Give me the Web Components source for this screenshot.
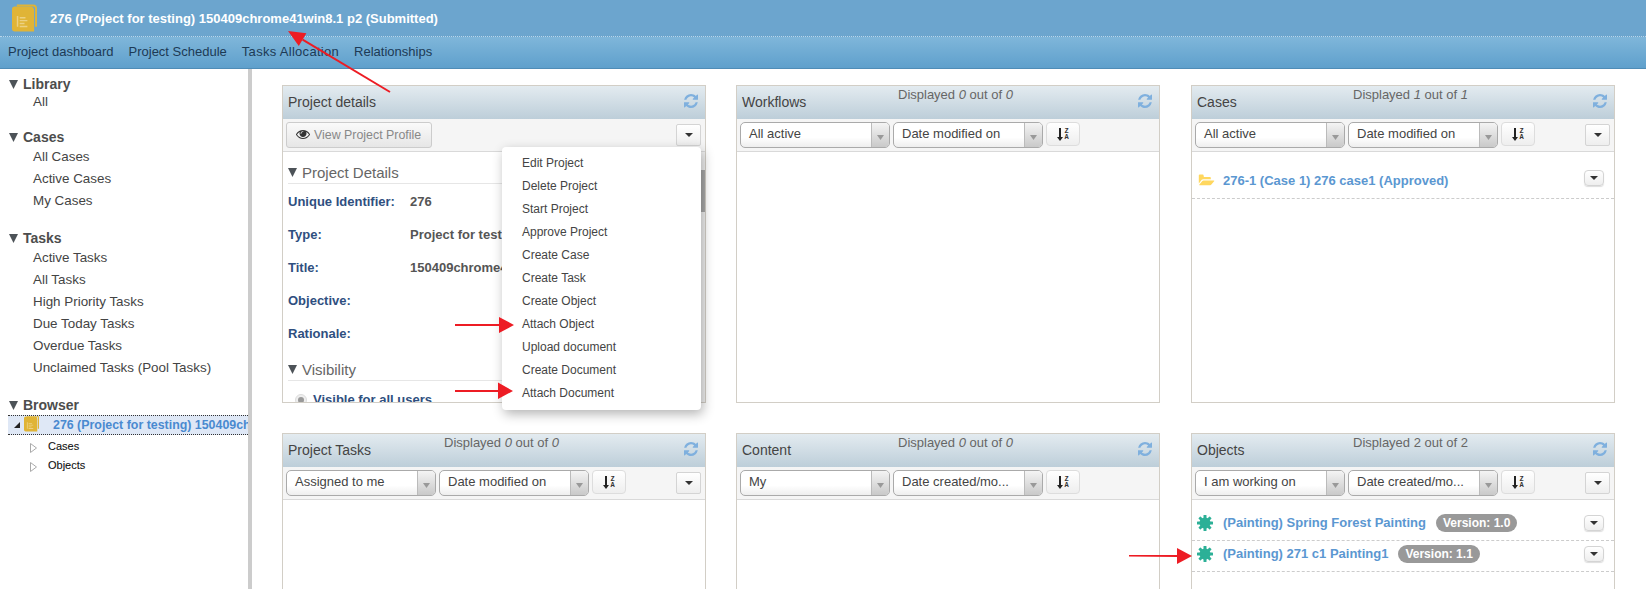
<!DOCTYPE html>
<html>
<head>
<meta charset="utf-8">
<title>Project 276</title>
<style>
    html, body { margin: 0; padding: 0; background: #fff; }
    body { width: 1646px; height: 589px; overflow: hidden; position: relative; font-family: "Liberation Sans", Arial, sans-serif; color: #333; }
    app-shell > [slot="side"] { display: block; }
</style>
</head>
<body>
<app-shell>
    <app-header slot="header" title-text="276 (Project for testing) 150409chrome41win8.1 p2 (Submitted)"></app-header>
    <app-nav slot="nav">
        <span>Project dashboard</span><span>Project Schedule</span><span style="letter-spacing:.3px">Tasks Allocation</span><span>Relationships</span>
    </app-nav>
    <div slot="side">
        <side-group heading="Library" style="margin-bottom:15px;--head-gap:-2px"><side-link>All</side-link></side-group>
        <side-group heading="Cases">
            <side-link>All Cases</side-link><side-link>Active Cases</side-link><side-link>My Cases</side-link>
        </side-group>
        <side-group heading="Tasks">
            <side-link>Active Tasks</side-link><side-link>All Tasks</side-link><side-link>High Priority Tasks</side-link>
            <side-link>Due Today Tasks</side-link><side-link>Overdue Tasks</side-link><side-link>Unclaimed Tasks (Pool Tasks)</side-link>
        </side-group>
        <side-group heading="Browser" style="--head-gap:1px">
            <browser-tree></browser-tree>
        </side-group>
    </div>

    <work-panel slot="main" heading="Project details">
        <view-button slot="tools"></view-button>
        <drop-button slot="tools" style="margin-left:auto"></drop-button>
        <project-details></project-details>
        <action-menu slot="over">
            <span>Edit Project</span><span>Delete Project</span><span>Start Project</span><span>Approve Project</span>
            <span>Create Case</span><span>Create Task</span><span>Create Object</span><span>Attach Object</span>
            <span>Upload document</span><span>Create Document</span><span>Attach Document</span>
        </action-menu>
    </work-panel>

    <work-panel slot="main" heading="Workflows" shown="0" total="0" italic style="margin-right:1px">
        <combo-box slot="tools" label="All active"></combo-box>
        <combo-box slot="tools" label="Date modified on"></combo-box>
        <sort-button slot="tools"></sort-button>
    </work-panel>

    <work-panel slot="main" heading="Cases" shown="1" total="1" italic>
        <combo-box slot="tools" label="All active"></combo-box>
        <combo-box slot="tools" label="Date modified on"></combo-box>
        <sort-button slot="tools"></sort-button>
        <drop-button slot="tools" style="margin-left:auto"></drop-button>
        <list-row kind="case" label="276-1 (Case 1) 276 case1 (Approved)" style="height:47px;--btn-lift:3px"></list-row>
    </work-panel>

    <work-panel slot="main" heading="Project Tasks" shown="0" total="0" italic>
        <combo-box slot="tools" label="Assigned to me"></combo-box>
        <combo-box slot="tools" label="Date modified on"></combo-box>
        <sort-button slot="tools"></sort-button>
        <drop-button slot="tools" style="margin-left:auto"></drop-button>
    </work-panel>

    <work-panel slot="main" heading="Content" shown="0" total="0" italic style="margin-right:1px">
        <combo-box slot="tools" label="My"></combo-box>
        <combo-box slot="tools" label="Date created/mo..."></combo-box>
        <sort-button slot="tools"></sort-button>
    </work-panel>

    <work-panel slot="main" heading="Objects" shown="2" total="2">
        <combo-box slot="tools" label="I am working on"></combo-box>
        <combo-box slot="tools" label="Date created/mo..."></combo-box>
        <sort-button slot="tools"></sort-button>
        <drop-button slot="tools" style="margin-left:auto"></drop-button>
        <list-row kind="object" label="(Painting) Spring Forest Painting" version="Version: 1.0" style="height:41px"></list-row>
        <list-row kind="object" label="(Painting) 271 c1 Painting1" version="Version: 1.1" style="height:31px"></list-row>
    </work-panel>
</app-shell>
<red-arrows></red-arrows>

<script>
const BOOK_ICON = (w, h) => `<svg width="${w}" height="${h}" viewBox="0 0 26 28">
    <path d="M5 0h17a4 4 0 0 1 4 4v19h-2V4a2 2 0 0 0-2-2H5z" fill="#e0b436"/>
    <path d="M3 2h16a4 4 0 0 1 4 4v22H3a3 3 0 0 1-3-3V5a3 3 0 0 1 3-3z" fill="#e0b436"/>
    <path d="M5 12h1.5v11H5zM8 13h6v1.5H8zM8 16h8v1.5H8zM8 19h5v1.5H8zM8 22h8v1.5H8z" fill="#ecd184"/>
</svg>`;
const CARET = `<svg width="8" height="4" viewBox="0 0 8 4"><path d="M0 0h8L4 4z" fill="#333"/></svg>`;

class AppShell extends HTMLElement {
    connectedCallback() {
        if (this.shadowRoot) return;
        this.attachShadow({ mode: 'open' });
        this.shadowRoot.innerHTML = `
            <style>
                :host { display: flex; flex-direction: column; width: 1646px; height: 589px; overflow: hidden; }
                .body { flex: 1; display: flex; min-height: 0; }
                .side { width: 248px; flex: none; padding-top: 6px; box-sizing: border-box; overflow: hidden; }
                .main {
                    flex: 1; min-width: 0; border-left: 4px solid #ccc; padding: 16px 0 0 30px;
                    display: grid; grid-template-columns: 424px 425px 424px; grid-auto-rows: 318px;
                    column-gap: 30px; row-gap: 30px; overflow: hidden;
                }
            </style>
            <slot name="header"></slot>
            <slot name="nav"></slot>
            <div class="body">
                <div class="side"><slot name="side"></slot></div>
                <div class="main"><slot name="main"></slot></div>
            </div>`;
    }
}
customElements.define('app-shell', AppShell);

class AppHeader extends HTMLElement {
    connectedCallback() {
        if (this.shadowRoot) return;
        this.attachShadow({ mode: 'open' });
        this.shadowRoot.innerHTML = `
            <style>
                :host {
                    display: flex; align-items: center; gap: 13px; height: 37px; box-sizing: border-box;
                    padding-left: 12px; background: #6ca5ce; border-bottom: 1px dotted #b9d6ea;
                    color: #fff; font: bold 13px "Liberation Sans", Arial, sans-serif;
                }
                svg { flex: none; }
            </style>
            ${BOOK_ICON(25, 28)}<span>${this.getAttribute('title-text')}</span>`;
    }
}
customElements.define('app-header', AppHeader);

class AppNav extends HTMLElement {
    connectedCallback() {
        if (this.shadowRoot) return;
        this.attachShadow({ mode: 'open' });
        this.shadowRoot.innerHTML = `
            <style>
                :host {
                    display: flex; align-items: center; gap: 15px; height: 32px; box-sizing: border-box;
                    padding: 0 8px 2px; background: linear-gradient(#7fb6da, #5fa0cc); border-bottom: 1px solid #4f8cb6;
                    color: #1d3a55; font: 13px "Liberation Sans", Arial, sans-serif;
                }
            </style>
            <slot></slot>`;
    }
}
customElements.define('app-nav', AppNav);

class SideGroup extends HTMLElement {
    connectedCallback() {
        if (this.shadowRoot) return;
        this.attachShadow({ mode: 'open' });
        this.shadowRoot.innerHTML = `
            <style>
                :host { display: block; margin-bottom: 17px; font-family: "Liberation Sans", Arial, sans-serif; }
                h3 {
                    margin: 0 0 var(--head-gap, 0); height: 18px; line-height: 18px; padding-left: 9px;
                    font-size: 14px; font-weight: bold; color: #4d4d4d; display: flex; align-items: center; gap: 5px;
                }
                h3 svg { flex: none; }
            </style>
            <h3><svg width="9" height="9" viewBox="0 0 9 9"><path d="M0 0h9L4.5 9z" fill="#4d5358"/></svg>${this.getAttribute('heading')}</h3>
            <slot></slot>`;
    }
}
customElements.define('side-group', SideGroup);

class SideLink extends HTMLElement {
    connectedCallback() {
        if (this.shadowRoot) return;
        this.attachShadow({ mode: 'open' });
        this.shadowRoot.innerHTML = `
            <style>
                :host { display: block; height: 22px; line-height: 22px; padding-left: 33px; font-size: 13.4px; color: #444; white-space: nowrap; }
            </style>
            <slot></slot>`;
    }
}
customElements.define('side-link', SideLink);

class BrowserTree extends HTMLElement {
    connectedCallback() {
        if (this.shadowRoot) return;
        this.attachShadow({ mode: 'open' });
        const child = (label) => `
            <div class="child">
                <svg width="7" height="10" viewBox="0 0 7 10"><path d="M.5.5l6 4.500-6 4.500z" fill="#fff" stroke="#aaa"/></svg>
                <span>${label}</span>
            </div>`;
        this.shadowRoot.innerHTML = `
            <style>
                :host { display: block; font-family: "Liberation Sans", Arial, sans-serif; }
                .sel {
                    margin-left: 8px; height: 20px; box-sizing: border-box; display: flex; align-items: center;
                    background: #dfe8f6; border-top: 1px dotted #333; border-bottom: 1px dotted #333; overflow: hidden;
                    white-space: nowrap; color: #4a8ad0; font-size: 12.4px; font-weight: bold;
                }
                .exp { width: 6px; margin: 0 4px 0 6px; flex: none; }
                .sel .icon { flex: none; margin-right: 14px; }
                .sel b { flex: none; }
                .child { height: 19px; display: flex; align-items: center; padding-left: 30px; gap: 11px; font-size: 11px; color: #111; -webkit-text-stroke: .1px #111; }
                .child svg { margin-top: 4px; flex: none; }
                .kids { padding-top: 1px; }
            </style>
            <div class="sel">
                <svg class="exp" width="6" height="6" viewBox="0 0 6 6"><path d="M6 0v6H0z" fill="#222"/></svg>
                <span class="icon">${BOOK_ICON(15, 17)}</span>
                <b>276 (Project for testing) 150409ch</b>
            </div>
            <div class="kids">${child('Cases')}${child('Objects')}</div>`;
    }
}
customElements.define('browser-tree', BrowserTree);

class WorkPanel extends HTMLElement {
    connectedCallback() {
        if (this.shadowRoot) return;
        this.attachShadow({ mode: 'open' });
        const shown = this.getAttribute('shown');
        const total = this.getAttribute('total');
        const tag = this.hasAttribute('italic') ? 'i' : 'span';
        const count = shown === null ? '' : `Displayed <${tag}>${shown}</${tag}> out of <${tag}>${total}</${tag}>`;
        this.shadowRoot.innerHTML = `
            <style>
                :host {
                    display: flex; flex-direction: column; position: relative; box-sizing: border-box;
                    border: 1px solid #d2cec6; background: #fff; min-height: 0;
                    font-family: "Liberation Sans", Arial, sans-serif;
                }
                .head {
                    flex: none; height: 33px; display: flex; box-sizing: border-box;
                    background: linear-gradient(#e3ebf0, #bdced9); color: #444;
                }
                .title { flex: none; width: 161px; box-sizing: border-box; padding: 8px 0 0 5px; font-size: 14px; line-height: 17px; }
                .count { padding-top: 0; font-size: 13px; line-height: 17px; color: #666; white-space: nowrap; }
                .refresh { margin: 8px 7px 0 auto; flex: none; }
                .tools {
                    flex: none; height: 33px; box-sizing: border-box; display: flex; align-items: center; gap: 3px;
                    padding: 0 3px; background: #f5f5f5; border-bottom: 1px solid #d9d9d9;
                }
                .content { flex: 1; min-height: 0; overflow: hidden; }
            </style>
            <div class="head">
                <div class="title">${this.getAttribute('heading')}</div>
                <div class="count">${count}</div>
                <svg class="refresh" width="14" height="14" viewBox="128 128 1536 1536"><path fill="#7fb0de" d="M1639 1056q0 5-1 7-64 268-268 434.5t-478 166.5q-146 0-282.5-55t-243.5-157l-129 129q-19 19-45 19t-45-19-19-45v-448q0-26 19-45t45-19h448q26 0 45 19t19 45-19 45l-137 137q71 66 161 102t187 36q134 0 250-65t186-179q11-17 53-117 8-23 30-23h192q13 0 22.5 9.5t9.5 22.5zm25-800v448q0 26-19 45t-45 19h-448q-26 0-45-19t-19-45 19-45l138-138q-148-137-349-137-134 0-250 65t-186 179q-11 17-53 117-8 23-30 23h-199q-13 0-22.5-9.5t-9.5-22.5v-7q65-268 270-434.5t480-166.5q146 0 284 55.5t245 156.5l130-129q19-19 45-19t45 19 19 45z"/></svg>
            </div>
            <div class="tools"><slot name="tools"></slot></div>
            <div class="content"><slot></slot></div>
            <slot name="over"></slot>`;
    }
}
customElements.define('work-panel', WorkPanel);

class ComboBox extends HTMLElement {
    connectedCallback() {
        if (this.shadowRoot) return;
        this.attachShadow({ mode: 'open' });
        this.shadowRoot.innerHTML = `
            <style>
                :host {
                    display: flex; flex: none; width: 150px; height: 26px; box-sizing: border-box; overflow: hidden;
                    border: 1px solid #aaa; border-radius: 5px; background: linear-gradient(#fff 60%, #eee);
                    font-size: 13px; color: #444; white-space: nowrap;
                }
                .label { flex: 1; padding: 0 0 3px 8px; line-height: 21px; }
                .arrow {
                    flex: none; width: 18px; display: flex; align-items: center; justify-content: center; padding-top: 4px; box-sizing: border-box;
                    border-left: 1px solid #bbb; background: linear-gradient(#f4f4f4, #c9c9c9);
                }
            </style>
            <span class="label">${this.getAttribute('label')}</span>
            <span class="arrow"><svg width="7" height="5" viewBox="0 0 7 5"><path d="M0 0h7L3.5 5z" fill="#999"/></svg></span>`;
    }
}
customElements.define('combo-box', ComboBox);

class SortButton extends HTMLElement {
    connectedCallback() {
        if (this.shadowRoot) return;
        this.attachShadow({ mode: 'open' });
        this.shadowRoot.innerHTML = `
            <style>
                :host {
                    display: flex; flex: none; width: 34px; height: 24px; margin-top: -2px; box-sizing: border-box;
                    align-items: center; justify-content: center; gap: 1px;
                    border: 1px solid #ddd; border-radius: 4px; background: linear-gradient(#fff, #eee);
                }
                .letters { display: flex; flex-direction: column; font: bold 7px/6.5px "Liberation Mono", monospace; color: #333; }
            </style>
            <svg width="6" height="13" viewBox="0 0 6 13"><path d="M2 0h2v9h2L3 13 0 9h2z" fill="#222"/></svg>
            <span class="letters"><span>Z</span><span>A</span></span>`;
    }
}
customElements.define('sort-button', SortButton);

class DropButton extends HTMLElement {
    connectedCallback() {
        if (this.shadowRoot) return;
        this.attachShadow({ mode: 'open' });
        this.shadowRoot.innerHTML = `
            <style>
                :host {
                    display: flex; flex: none; width: 25px; height: 22px; margin-right: 1px; margin-top: -1px; box-sizing: border-box;
                    align-items: center; justify-content: center;
                    border: 1px solid #d4d4d4; border-radius: 2px; background: linear-gradient(#fff, #eee);
                }
                :host([small]) { width: 20px; height: 16px; border-radius: 4px; margin: 0; box-shadow: 0 1px 1px #ddd; }
            </style>
            ${CARET}`;
    }
}
customElements.define('drop-button', DropButton);

class ViewButton extends HTMLElement {
    connectedCallback() {
        if (this.shadowRoot) return;
        this.attachShadow({ mode: 'open' });
        this.shadowRoot.innerHTML = `
            <style>
                :host {
                    display: flex; flex: none; width: 146px; height: 26px; box-sizing: border-box; align-items: center; gap: 4px;
                    padding-left: 9px; border: 1px solid #ccc; border-radius: 3px; background: linear-gradient(#fafafa, #e6e6e6);
                    font-size: 12.4px; color: #888; white-space: nowrap;
                }
                svg { margin-top: -3px; flex: none; }
            </style>
            <svg width="14" height="14" viewBox="0 0 1792 1792"><path fill="#333" d="M1664 960q-152-236-381-353 61 104 61 225 0 185-131.5 316.5t-316.5 131.5-316.5-131.5-131.5-316.5q0-121 61-225-229 117-381 353 133 205 333.5 326.5t434.5 121.5 434.5-121.5 333.5-326.5zm-720-384q0-20-14-34t-34-14q-125 0-214.5 89.5t-89.5 214.5q0 20 14 34t34 14 34-14 14-34q0-86 61-147t147-61q20 0 34-14t14-34zm848 384q0 34-20 69-140 230-376.5 368.5t-499.5 138.5-499.5-139-376.5-368q-20-35-20-69t20-69q140-229 376.5-368t499.5-139 499.5 139 376.5 368q20 35 20 69z"/></svg>
            <span>View Project Profile</span>`;
    }
}
customElements.define('view-button', ViewButton);

class ProjectDetails extends HTMLElement {
    connectedCallback() {
        if (this.shadowRoot) return;
        this.attachShadow({ mode: 'open' });
        const row = (k, v) => `<div class="row"><b>${k}</b><span>${v}</span></div>`;
        const tri = `<svg width="9" height="9" viewBox="0 0 9 9"><path d="M0 0h9L4.5 9z" fill="#4d5358"/></svg>`;
        this.shadowRoot.innerHTML = `
            <style>
                :host { display: flex; height: 100%; overflow: hidden; }
                .inner { flex: 1; min-width: 0; padding: 10px 0 0 5px; overflow: hidden; }
                h4 {
                    margin: 0 14px 0 0; height: 20px; padding-bottom: 1px; display: flex; align-items: center; gap: 5px;
                    font-size: 15px; font-weight: normal; color: #666; border-bottom: 1px solid #e6e6e6;
                }
                .row { display: flex; height: 33px; align-items: center; font-size: 13px; white-space: nowrap; }
                .row b { flex: none; width: 122px; color: #2f4f7f; }
                .row span { font-weight: bold; color: #555; }
                .first { margin-top: 1px; }
                .vis { margin-top: 9px; }
                .radio { display: flex; align-items: center; gap: 6px; margin: 11px 0 0 7px; font-size: 13px; font-weight: bold; color: #2f4f7f; white-space: nowrap; }
                .dot { width: 12px; height: 12px; border-radius: 50%; box-sizing: border-box; background: #eee; border: 1px solid #ddd; display: flex; align-items: center; justify-content: center; }
                .dot::after { content: ""; width: 6px; height: 6px; border-radius: 50%; background: #999; }
                .bar { flex: none; width: 4px; padding-top: 18px; background: #f1f1f1; }
                .thumb { height: 42px; background: #aaa; }
            </style>
            <div class="inner">
                <h4>${tri}Project Details</h4>
                <div class="first">
                ${row('Unique Identifier:', '276')}
                ${row('Type:', 'Project for testing')}
                ${row('Title:', '150409chrome41win8.1 p2')}
                ${row('Objective:', '')}
                ${row('Rationale:', '')}
                </div>
                <h4 class="vis">${tri}Visibility</h4>
                <div class="radio"><span class="dot"></span>Visible for all users</div>
            </div>
            <div class="bar"><div class="thumb"></div></div>`;
    }
}
customElements.define('project-details', ProjectDetails);

class ActionMenu extends HTMLElement {
    connectedCallback() {
        if (this.shadowRoot) return;
        this.attachShadow({ mode: 'open' });
        this.shadowRoot.innerHTML = `
            <style>
                :host {
                    position: absolute; left: 219px; top: 61px; width: 199px; box-sizing: border-box; z-index: 5;
                    display: flex; flex-direction: column; padding: 5px 0 5px 20px; background: #fff;
                    border-radius: 4px; box-shadow: 2px 4px 12px rgba(0,0,0,.3);
                    font-size: 12px; color: #444;
                }
                ::slotted(span) { display: block; height: 23px; line-height: 23px; white-space: nowrap; }
            </style>
            <slot></slot>`;
    }
}
customElements.define('action-menu', ActionMenu);

class ListRow extends HTMLElement {
    connectedCallback() {
        if (this.shadowRoot) return;
        this.attachShadow({ mode: 'open' });
        const kind = this.getAttribute('kind');
        const version = this.getAttribute('version');
        const spokes = [0, 45, 90, 135].map(a => `<rect x="6.5" y="0" width="3" height="16" rx=".6" fill="#2cb097" transform="rotate(${a} 8 8)"/>`).join('');
        const icon = kind === 'case'
            ? `<svg width="18" height="13" viewBox="0 256 1920 1280"><path fill="#ffd75e" d="M1845 931q0-35-53-35h-1088q-40 0-85.5 21.5t-71.5 52.5l-294 363q-18 24-18 40 0 35 53 35h1088q40 0 86-22t71-53l294-363q18-22 18-39zm-1141-163h768v-160q0-40-28-68t-68-28h-576q-40 0-68-28t-28-68v-64q0-40-28-68t-68-28h-320q-40 0-68 28t-28 68v853l256-315q44-53 116-87.5t140-34.5z"/></svg>`
            : `<svg width="16" height="16" viewBox="0 0 16 16">${spokes}<circle cx="8" cy="8" r="5.5" fill="#2cb097"/></svg>`;
        this.shadowRoot.innerHTML = `
            <style>
                :host {
                    display: flex; align-items: flex-end; box-sizing: border-box; padding: 0 10px 0 5px;
                    border-bottom: 1px dashed #ccc; white-space: nowrap;
                }
                .icon { flex: none; width: 26px; height: 17px; margin-bottom: 9px; display: flex; align-items: center; }
                .label { font-size: 13px; line-height: 17px; margin-bottom: 9px; font-weight: bold; color: #5b97d1; }
                .badge {
                    margin: 0 0 8px 10px; height: 18px; line-height: 18px; padding: 0 7px; border-radius: 9px;
                    background: #999; color: #fff; font-size: 12px; font-weight: bold;
                }
                drop-button { margin-left: auto; margin-bottom: calc(9px + var(--btn-lift, 0px)); }
            </style>
            <span class="icon">${icon}</span>
            <span class="label">${this.getAttribute('label')}</span>
            ${version ? `<span class="badge">${version}</span>` : ''}
            <drop-button small></drop-button>`;
    }
}
customElements.define('list-row', ListRow);

class RedArrows extends HTMLElement {
    connectedCallback() {
        if (this.shadowRoot) return;
        this.attachShadow({ mode: 'open' });
        this.shadowRoot.innerHTML = `
            <style>
                :host { position: absolute; left: 0; top: 0; width: 1646px; height: 589px; pointer-events: none; z-index: 10; }
                svg { display: block; }
            </style>
            <svg width="1646" height="589" viewBox="0 0 1646 589">
                <g fill="#ed1c24">
                    <path d="M390 92L302.600 39.700" stroke="#ed1c24" stroke-width="2"/>
                    <path d="M288 31l18.400 2.300-7.600 12.800z"/>
                    <path d="M455 324h44v-7l15 8-15 8v-7h-44z"/>
                    <path d="M455 390h43v-7.500l15 8.500-15 8V392h-43z"/>
                    <path d="M1129 555h48v-7l15 8-15 8v-7l-48-.5z"/>
                </g>
            </svg>`;
    }
}
customElements.define('red-arrows', RedArrows);
</script>
</body>
</html>
